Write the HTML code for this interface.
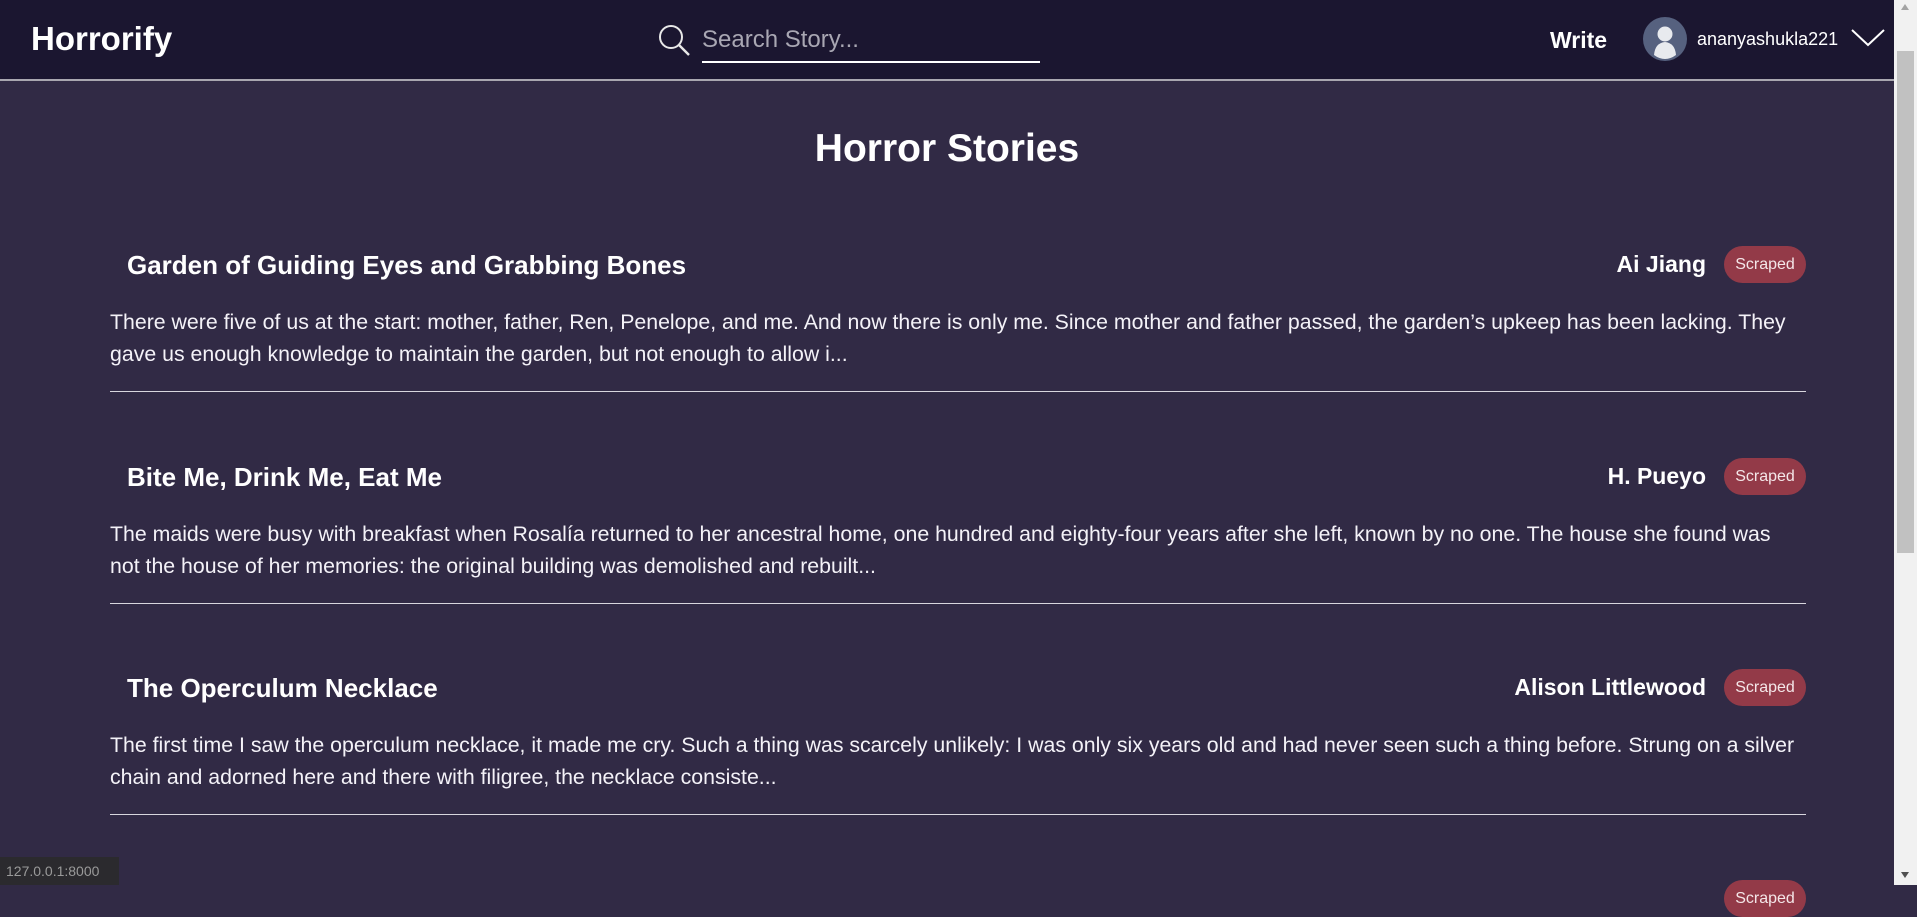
<!DOCTYPE html>
<html><head><meta charset="utf-8"><style>
*{margin:0;padding:0;box-sizing:border-box}
body{width:1917px;height:885px;overflow:hidden;background:#312a45;font-family:"Liberation Sans",sans-serif;color:#fff;position:relative}
.hdr{position:absolute;left:0;top:0;width:1894px;height:81px;background:#1b1630;border-bottom:2px solid #a9a7b0}
.abs{position:absolute;white-space:nowrap}
.sb{position:absolute;right:0;top:0;width:23px;height:885px;background:#f1f1f1}
.thumb{position:absolute;right:3px;top:51px;width:17px;height:502px;background:#c1c1c1}
.t{font-weight:bold;font-size:26px}
.a{font-weight:bold;font-size:23px;text-align:right}
.badge{position:absolute;width:82px;height:37px;border-radius:19px;background:#933a48;font-size:16px;line-height:37px;text-align:center;color:#f4e6e8}
.p{position:absolute;left:110px;width:1750px;font-size:21.3px;line-height:32px;color:#f4f2f8}
.hr{position:absolute;left:110px;width:1696px;height:1px;background:#d8d6de}
</style></head><body>
<div class="hdr">
<div class="abs" style="left:31px;top:20px;font-size:33px;font-weight:bold">Horrorify</div>
<svg class="abs" style="left:657px;top:23px" width="34" height="34" viewBox="0 0 34 34"><circle cx="14" cy="14" r="11" fill="none" stroke="#e8e8e8" stroke-width="2"/><line x1="22" y1="22" x2="32" y2="32" stroke="#e8e8e8" stroke-width="2.4"/></svg>
<div class="abs" style="left:702px;top:26px;font-size:24px;color:#a9a7b3">Search Story...</div>
<div class="abs" style="left:702px;top:61px;width:338px;height:2px;background:#fff"></div>
<div class="abs" style="left:1550px;top:27px;font-size:23px;font-weight:bold">Write</div>
<svg class="abs" style="left:1643px;top:17px" width="44" height="44" viewBox="0 0 44 44"><circle cx="22" cy="22" r="22" fill="#56617f"/><circle cx="22" cy="17" r="7.5" fill="#e8eaee"/><path d="M11 38 Q12 26 22 25 Q32 26 33 38 Q22 46 11 38Z" fill="#e8eaee"/></svg>
<div class="abs" style="left:1697px;top:29px;font-size:18px">ananyashukla221</div>
<svg class="abs" style="left:1851px;top:29px" width="34" height="18" viewBox="0 0 34 18"><polyline points="1,1 17,16 33,1" fill="none" stroke="#fff" stroke-width="2"/></svg>
</div>
<div class="abs" style="left:0;width:1894px;top:127px;text-align:center;font-size:39px;font-weight:bold">Horror Stories</div>

<div class="abs t" style="left:127px;top:250px">Garden of Guiding Eyes and Grabbing Bones</div>
<div class="abs a" style="right:211px;top:251px">Ai Jiang</div>
<div class="badge" style="left:1724px;top:246px">Scraped</div>
<div class="p" style="top:306px">There were five of us at the start: mother, father, Ren, Penelope, and me. And now there is only me. Since mother and father passed, the garden’s upkeep has been lacking. They<br>gave us enough knowledge to maintain the garden, but not enough to allow i...</div>
<div class="hr" style="top:391px"></div>

<div class="abs t" style="left:127px;top:462px">Bite Me, Drink Me, Eat Me</div>
<div class="abs a" style="right:211px;top:463px">H. Pueyo</div>
<div class="badge" style="left:1724px;top:458px">Scraped</div>
<div class="p" style="top:518px">The maids were busy with breakfast when Rosalía returned to her ancestral home, one hundred and eighty-four years after she left, known by no one. The house she found was<br>not the house of her memories: the original building was demolished and rebuilt...</div>
<div class="hr" style="top:603px"></div>

<div class="abs t" style="left:127px;top:673px">The Operculum Necklace</div>
<div class="abs a" style="right:211px;top:674px">Alison Littlewood</div>
<div class="badge" style="left:1724px;top:669px">Scraped</div>
<div class="p" style="top:729px">The first time I saw the operculum necklace, it made me cry. Such a thing was scarcely unlikely: I was only six years old and had never seen such a thing before. Strung on a silver<br>chain and adorned here and there with filigree, the necklace consiste...</div>
<div class="hr" style="top:814px"></div>

<div class="badge" style="left:1724px;top:880px">Scraped</div>
<div class="abs" style="left:0;top:857px;width:119px;height:28px;background:#2b2a2e;color:#9a9a9a;font-size:14px;line-height:28px;padding-left:6px">127.0.0.1:8000</div>
<div class="sb"><div class="thumb"></div>
<div class="abs" style="left:7px;top:4px;width:0;height:0;border-left:4px solid transparent;border-right:4px solid transparent;border-bottom:6px solid #a3a3a3"></div>
<div class="abs" style="left:7px;top:872px;width:0;height:0;border-left:4px solid transparent;border-right:4px solid transparent;border-top:6px solid #505050"></div>
</div>
</body></html>
